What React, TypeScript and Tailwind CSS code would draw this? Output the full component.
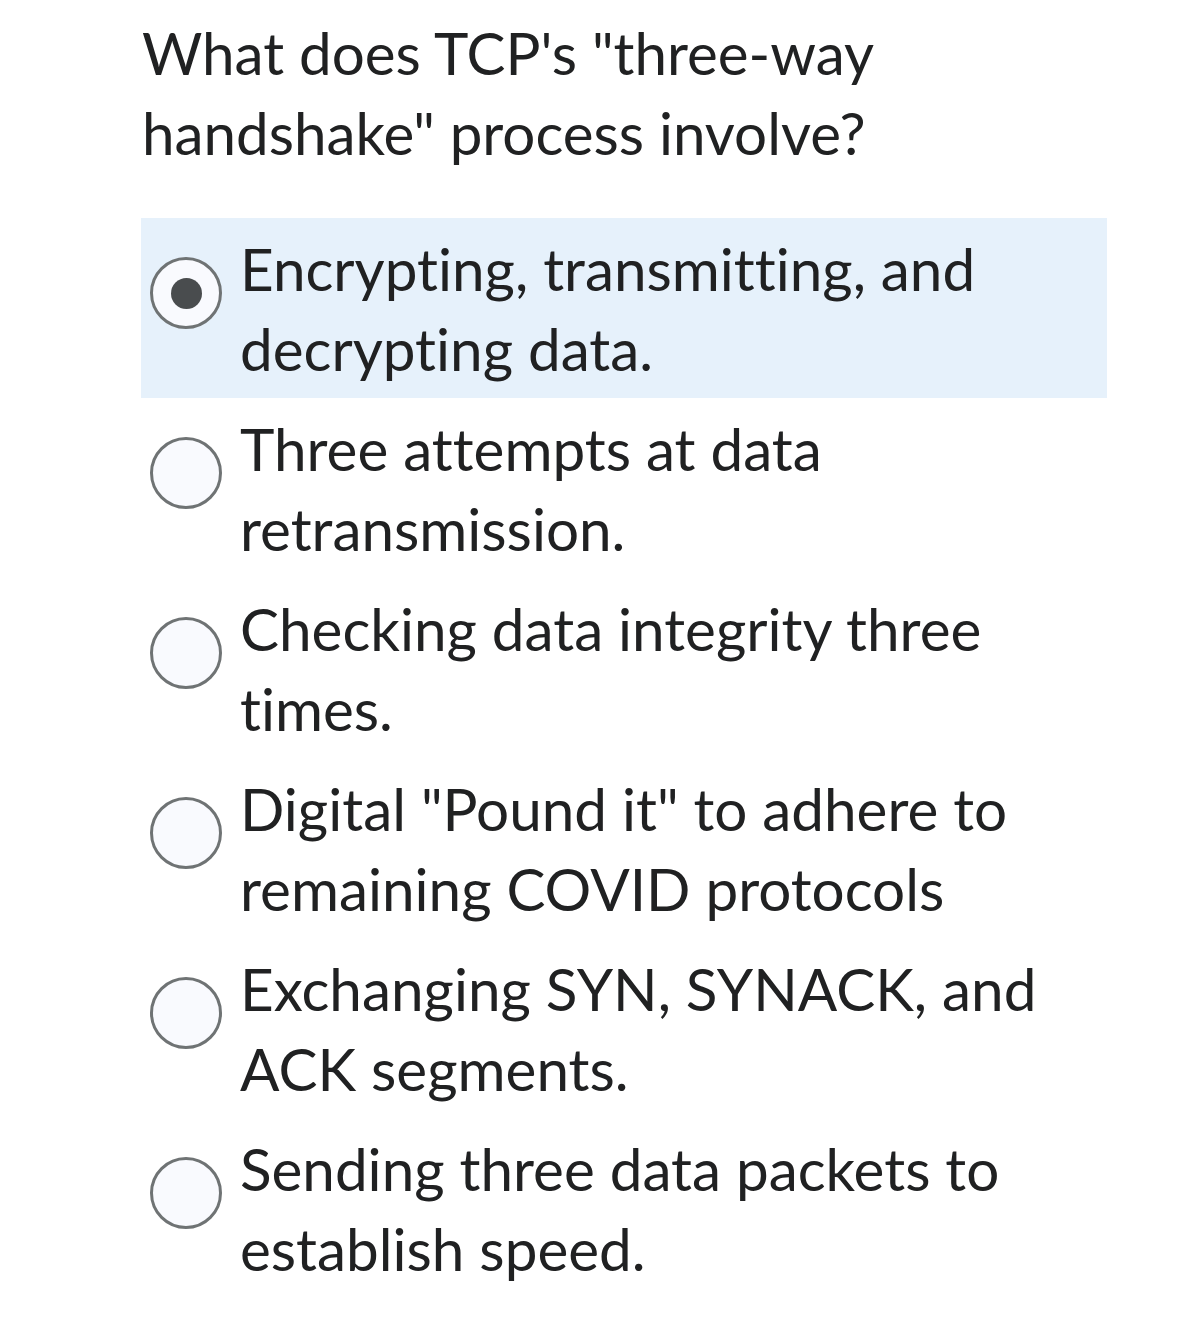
import React from "react";

const options = [
  "Encrypting, transmitting, and decrypting data.",
  "Three attempts at data retransmission.",
  "Checking data integrity three times.",
  'Digital "Pound it" to adhere to remaining COVID protocols',
  "Exchanging SYN, SYNACK, and ACK segments.",
  "Sending three data packets to establish speed.",
];

export default function App() {
  return (
    <div
      className="w-[1179px] h-[1343px] bg-white text-[#202122] pl-[141px] pt-[12px] [font-variant-ligatures:none]"
      style={{ fontFamily: "Lato, 'Noto Sans', sans-serif" }}
    >
      <div className="w-[966px]">
        <h1 className="text-[58.3px] leading-[80px] font-normal pl-[1px] pr-[120px]">
          What does TCP's "three-way handshake" process involve?
        </h1>
        <div className="mt-[46px] flex flex-col">
          {options.map((o, i) => (
            <div
              key={i}
              className={`flex h-[180px] pt-[10px] ${i === 0 ? "bg-[#e6f1fb]" : ""}`}
            >
              <div className="w-[99px] shrink-0 pl-[9px] pt-[29px]">
                <div className="w-[72px] h-[72px] rounded-full border-[3px] border-[#6f7374] bg-[#f9fafe] flex items-center justify-center">
                  {i === 0 && <div className="w-[31px] h-[31px] rounded-full bg-[#494c4e]" />}
                </div>
              </div>
              <div className="text-[58.4px] leading-[80px] pr-[40px]">{o}</div>
            </div>
          ))}
        </div>
      </div>
    </div>
  );
}
